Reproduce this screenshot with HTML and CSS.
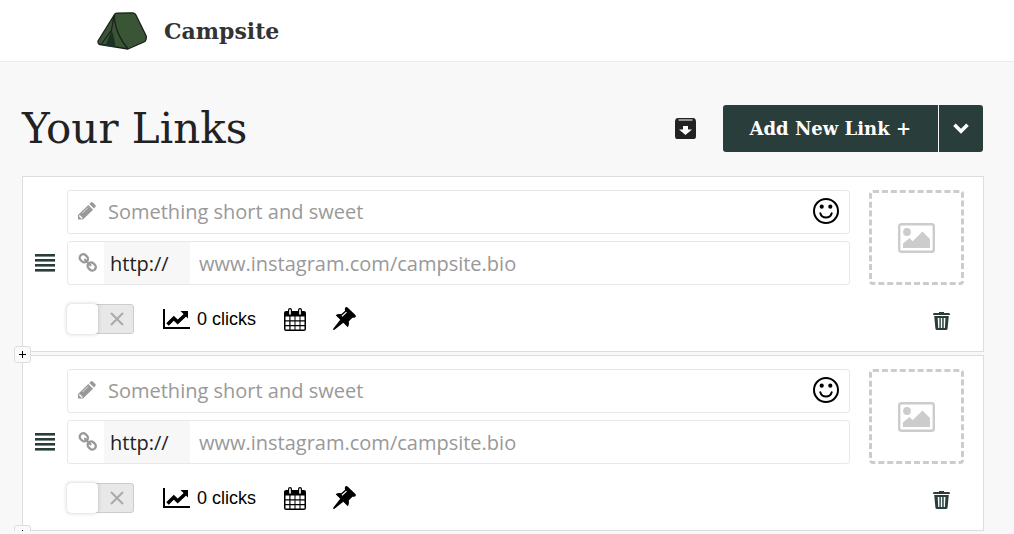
FILE: index.html
```html
<!DOCTYPE html>
<html lang="en">
<head>
    <meta charset="utf-8">
    <meta name="viewport" content="width=device-width, initial-scale=1">
    <title>Campsite - Your Links</title>
    <link rel="stylesheet" href="styles.css">
</head>
<body>
    <!-- shared icons -->
    <svg class="sprite" aria-hidden="true">
        <symbol id="i-pencil" viewBox="0 0 18 18">
            <path d="M0 13 10.300 2.900l4.800 4.800L5 17.500H0zM11.300 1.900 12.800.5q1-.8 2 .1l2.500 2.500q.9 1 0 1.900l-1.200 1.600z"/>
            <path d="m1.300 13.500 3 3" fill="none" stroke="#fff" stroke-width="1.300"/>
            <path d="m4.500 11 5.500-5.500" fill="none" stroke="#fff" stroke-width=".7"/>
        </symbol>
        <symbol id="i-chain" viewBox="0 0 20 20">
            <g fill="none" stroke="currentColor" stroke-width="2.3" stroke-linecap="round">
                <rect x="1.500" y="1.800" width="8.600" height="7" rx="3.400" transform="rotate(43 5.800 5.300)"/>
                <rect x="9.400" y="10" width="8.600" height="7" rx="3.400" transform="rotate(43 13.700 13.500)"/>
                <path d="m7 6.700 5.500 5.500"/>
            </g>
        </symbol>
        <symbol id="i-smile" viewBox="0 0 26 26">
            <circle cx="13" cy="13" r="12" fill="none" stroke="currentColor" stroke-width="2"/>
            <circle cx="8.7" cy="8.7" r="2.1"/>
            <circle cx="17.3" cy="8.7" r="2.1"/>
            <path d="M7.3 15.2q1.2 4.3 5.7 4.3t5.7-4.3" fill="none" stroke="currentColor" stroke-width="2" stroke-linecap="round"/>
        </symbol>
        <symbol id="i-chart" viewBox="0 0 27 20">
            <path d="M0 0h2v18h25v2H0z"/>
            <path d="m4.500 15.500 6.300-6.200 3.900 3.700 7.500-7" fill="none" stroke="currentColor" stroke-width="3.600"/>
            <path d="M17.500 2H25v7.500z"/>
        </symbol>
        <symbol id="i-calendar" viewBox="0 0 22 23">
            <path fill-rule="evenodd" d="M2 3h2V2a2 2 0 0 1 4 0v1h6V2a2 2 0 0 1 4 0v1h2q2 0 2 2v16q0 2-2 2H2q-2 0-2-2V5q0-2 2-2zm-.5 5.5v3.800h3.800V8.500zm5 0v3.800h4V8.500zm5 0v3.800h4V8.500zm5 0v3.800h4V8.500zm-15 5v3.500h3.800v-3.500zm5 0v3.500h4v-3.500zm5 0v3.500h4v-3.500zm5 0v3.500h4v-3.500zm-15 4.700v3.300h3.800v-3.300zm5 0v3.300h4v-3.300zm5 0v3.300h4v-3.300zm5 0v3.300h4v-3.300z"/>
            <path d="M6 2v4M16 2v4" stroke="#fff" stroke-width="1.600" stroke-linecap="round"/>
        </symbol>
        <symbol id="i-pin" viewBox="0 0 23 23">
            <path d="M12.300.5q1.200-1 2.300.1l7.800 7.500q1 1.200-.2 2.200-1.300.8-2.800.4l-3.700 3.800q.8 3.400-.9 5.700L10.300 15.700 1.500 22.700 0 23l.4-1.600L7.200 12.700 2.700 8.200q2.200-1.900 5.500-1l3.900-3.500q-.6-1.800.2-3.200z"/>
            <path d="m9 9.300 4.500-4.200" stroke="#fff" stroke-width="1.200"/>
        </symbol>
        <symbol id="i-image" viewBox="0 0 37 30">
            <rect x="1.200" y="1.200" width="34.600" height="27.600" rx="2" fill="none" stroke="currentColor" stroke-width="2.400"/>
            <circle cx="9" cy="9" r="3.900"/>
            <path d="M5 25v-4.500l6.500-5.500 3.200 3.300L24.500 8.500 32 16v9z"/>
        </symbol>
        <symbol id="i-trash" viewBox="0 0 17 18">
            <path d="M6 1V0h5v1h5q1 .2 1 2H0q0-1.800 1-2z"/>
            <path fill-rule="evenodd" d="M1.200 4h14.600L14.600 16.500q-.2 1.500-1.600 1.500H4q-1.400 0-1.600-1.500zM4.700 6l.5 10h1.200V6zm3.100 0v10h1.400V6zm2.900 0v10h1.200l.5-10z"/>
        </symbol>
        <symbol id="i-cross" viewBox="0 0 14 14">
            <path d="m1 1 12 12M13 1 1 13" stroke="currentColor" stroke-width="2"/>
        </symbol>
    </svg>

    <header class="topbar">
        <a class="brand" href="#">
            <svg class="brand-logo" viewBox="0 0 50 38" aria-hidden="true">
                <path d="M17.500 2.500Q18 1.200 20 1.100L35.500.8q2 0 3 1.500L49 23.500q.6 1.500 0 4L48 29.500 31 37 3 32.500Q.8 32 1 29z" fill="#3a5535" stroke="#192018" stroke-width="1.300" stroke-linejoin="round"/>
                <path d="M17.500 2.500Q17 6 18.300 12 21 25 31 37M17 3.500 14.500 18 4.500 32" fill="none" stroke="#192018" stroke-width="1.200"/>
                <path d="M14.500 18 8.500 33.700l10 1.500Q17.500 25 14.500 18z" fill="#1c3023"/>
            </svg>
            <span>Campsite</span>
        </a>
    </header>

    <main class="content">
        <div class="page-head">
            <h1>Your Links</h1>
            <button class="icon-btn archive" type="button" aria-label="Archived links">
                <svg viewBox="0 0 21 21" aria-hidden="true">
                    <path d="M3 0h15q3 0 3 4v14q0 3-2 3H2q-2 0-2-3V4q0-4 3-4z" fill="#222"/>
                    <path d="M3.500 2h14" stroke="#bbb" stroke-width="1.500"/>
                    <path d="M8 8h5v3.500h4L10.500 17 4 11.500h4z" fill="#fff"/>
                </svg>
            </button>
            <div class="btn-group">
                <button class="btn" type="button">Add New Link +</button>
                <button class="btn btn-caret" type="button" aria-label="More options">
                    <svg viewBox="0 0 16 11" aria-hidden="true"><path d="m1.500 1.800 6.500 6.500 6.500-6.500" fill="none" stroke="#fff" stroke-width="3.600"/></svg>
                </button>
            </div>
        </div>

        <div class="links">
            <section class="card">
                <button class="handle" type="button" aria-label="Reorder link"><i></i><i></i><i></i><i></i></button>
                <div class="fields">
                    <label class="field field-title">
                        <svg class="i-pencil" aria-hidden="true"><use href="#i-pencil"/></svg>
                        <input type="text" placeholder="Something short and sweet" aria-label="Link title">
                        <svg class="i-smile" aria-hidden="true"><use href="#i-smile"/></svg>
                    </label>
                    <div class="field field-url">
                        <svg class="i-chain" aria-hidden="true"><use href="#i-chain"/></svg>
                        <select aria-label="Protocol"><option>http://</option><option>https://</option></select>
                        <input type="text" placeholder="www.instagram.com/campsite.bio" aria-label="Link address">
                    </div>
                </div>
                <button class="thumb" type="button" aria-label="Add image"><svg aria-hidden="true"><use href="#i-image"/></svg></button>
                <div class="actions">
                    <label class="toggle">
                        <input type="checkbox" aria-label="Link enabled">
                        <svg aria-hidden="true"><use href="#i-cross"/></svg>
                    </label>
                    <a class="clicks" href="#"><svg aria-hidden="true"><use href="#i-chart"/></svg>0 clicks</a>
                    <button class="icon-btn calendar" type="button" aria-label="Schedule"><svg aria-hidden="true"><use href="#i-calendar"/></svg></button>
                    <button class="icon-btn pin" type="button" aria-label="Pin"><svg aria-hidden="true"><use href="#i-pin"/></svg></button>
                </div>
                <button class="icon-btn trash" type="button" aria-label="Delete"><svg aria-hidden="true"><use href="#i-trash"/></svg></button>
                <button class="insert" type="button" aria-label="Insert link"></button>
            </section>

            <section class="card">
                <button class="handle" type="button" aria-label="Reorder link"><i></i><i></i><i></i><i></i></button>
                <div class="fields">
                    <label class="field field-title">
                        <svg class="i-pencil" aria-hidden="true"><use href="#i-pencil"/></svg>
                        <input type="text" placeholder="Something short and sweet" aria-label="Link title">
                        <svg class="i-smile" aria-hidden="true"><use href="#i-smile"/></svg>
                    </label>
                    <div class="field field-url">
                        <svg class="i-chain" aria-hidden="true"><use href="#i-chain"/></svg>
                        <select aria-label="Protocol"><option>http://</option><option>https://</option></select>
                        <input type="text" placeholder="www.instagram.com/campsite.bio" aria-label="Link address">
                    </div>
                </div>
                <button class="thumb" type="button" aria-label="Add image"><svg aria-hidden="true"><use href="#i-image"/></svg></button>
                <div class="actions">
                    <label class="toggle">
                        <input type="checkbox" aria-label="Link enabled">
                        <svg aria-hidden="true"><use href="#i-cross"/></svg>
                    </label>
                    <a class="clicks" href="#"><svg aria-hidden="true"><use href="#i-chart"/></svg>0 clicks</a>
                    <button class="icon-btn calendar" type="button" aria-label="Schedule"><svg aria-hidden="true"><use href="#i-calendar"/></svg></button>
                    <button class="icon-btn pin" type="button" aria-label="Pin"><svg aria-hidden="true"><use href="#i-pin"/></svg></button>
                </div>
                <button class="icon-btn trash" type="button" aria-label="Delete"><svg aria-hidden="true"><use href="#i-trash"/></svg></button>
                <button class="insert" type="button" aria-label="Insert link"></button>
            </section>
        </div>
    </main>
</body>
</html>
```
FILE: styles.css
```css
* { box-sizing: border-box; }
body { margin: 0; background: #f8f8f8; color: #222; font-family: "Open Sans", sans-serif; }
button, input, select { margin: 0; padding: 0; border: 0; background: none; color: inherit; font: inherit; }
button { cursor: pointer; }
svg { display: block; fill: currentColor; flex: none; }
.sprite { position: absolute; width: 0; height: 0; }

/* header */
.topbar { display: flex; align-items: center; height: 62px; padding: 0 97px; background: #fff; border-bottom: 1px solid #ededed; }
.brand { display: flex; align-items: center; gap: 17px; color: #333; font: bold 22px "DejaVu Serif", serif; text-decoration: none; }
.brand-logo { width: 50px; height: 38px; }

.content { padding: 43px 30px 0 22px; overflow: hidden; }
.page-head { display: flex; align-items: center; height: 47px; margin-bottom: 24px; }
h1 { flex: 1; margin: 0; font: 42px/47px "DejaVu Serif", serif; }
.icon-btn { display: flex; align-items: center; justify-content: center; color: #000; }
.archive { margin-right: 27px; }
.archive svg { width: 21px; height: 21px; }
.btn-group { display: flex; gap: 1px; height: 47px; margin-right: 1px; border-radius: 3px; overflow: hidden; }
.btn { padding: 0 27px; background: #293e3b; color: #fff; font: bold 18px "DejaVu Serif", serif; }
.btn-caret { padding: 0 14px; }
.btn-caret svg { width: 16px; height: 11px; }

/* link cards */
.links { display: grid; gap: 3px; }
.card {
    position: relative;
    display: grid;
    grid-template-columns: 44px 1fr 95px;
    row-gap: 19px;
    padding: 13px 19px 17px 0;
    background: #fff;
    border: 1px solid #ddd;
}
.handle { grid-row: 1 / 3; display: flex; flex-direction: column; align-items: center; align-self: center; gap: 2px; padding-top: 2px; }
.handle i { width: 20px; height: 3px; background: #293e3b; border-bottom: 1px solid #7d8b89; }
.fields { display: grid; gap: 7px; margin-right: 19px; }
.field { display: flex; align-items: center; height: 44px; padding: 0 10px; border: 1px solid #e8e8e8; border-radius: 3px; color: #999; font-size: 20px; }
.field input { flex: 1; min-width: 0; height: 42px; outline: 0; color: #222; }
.field input::placeholder { color: #999; opacity: 1; }
.field-title { padding-bottom: 2px; }
.i-pencil { width: 18px; height: 18px; margin-right: 12px; }
.i-smile { width: 26px; height: 26px; color: #000; }
.i-chain { width: 20px; height: 20px; margin-right: 6px; }
.field-url select { width: 86px; height: 42px; margin-right: 9px; padding-left: 6px; appearance: none; background: #f7f7f7; color: #222; }
.thumb { display: flex; align-items: center; justify-content: center; width: 95px; height: 95px; border: 3px dashed #ccc; border-radius: 4px; color: #ccc; }
.thumb svg { width: 37px; height: 30px; }

.actions { grid-column: 2; display: flex; align-items: center; height: 30px; }
.toggle { position: relative; display: flex; align-items: center; width: 67px; height: 30px; margin-right: 29px; padding-left: 42px; border: 1px solid #ccc; border-radius: 3px; background: #e8e8e8; color: #aaa; }
.toggle svg { width: 14px; height: 14px; }
.toggle input { appearance: none; position: absolute; top: -1px; left: -1px; width: 31px; height: 30px; border-radius: 4px; background: #fff; box-shadow: 0 0 4px rgba(0, 0, 0, .2); }
.clicks { display: flex; align-items: center; gap: 7px; margin-right: 28px; color: #000; font: 18px "Liberation Sans", Arial, sans-serif; text-decoration: none; }
.clicks svg { width: 27px; height: 20px; }
.calendar { margin-right: 27px; }
.calendar svg { width: 22px; height: 23px; }
.pin { padding-bottom: 2px; }
.pin svg { width: 23px; height: 23px; }
.trash { justify-self: end; margin-right: 14px; padding-top: 4px; color: #293e3b; }
.trash svg { width: 17px; height: 18px; }

/* sits on the gap between two cards */
.insert { position: absolute; z-index: 1; left: -9px; bottom: -12px; width: 17px; height: 17px; border: 1px solid #ddd; border-radius: 3px; background: linear-gradient(#000, #000) center / 7px 1px no-repeat, linear-gradient(#000, #000) center / 1px 7px no-repeat, #fafafa; }
```
